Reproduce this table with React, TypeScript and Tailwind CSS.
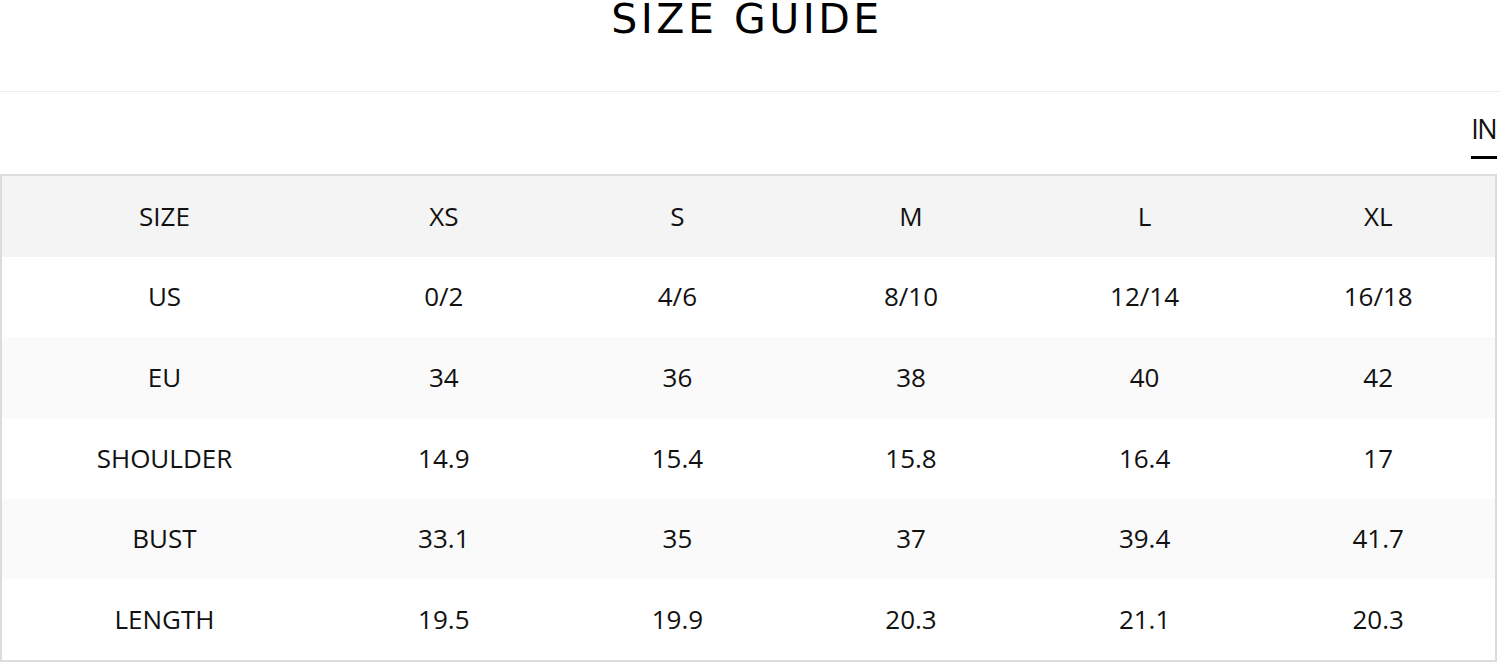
const rows: { label: string; values: string[]; bg: string }[] = [
  { label: "SIZE", values: ["XS", "S", "M", "L", "XL"], bg: "bg-[#f4f4f4]" },
  { label: "US", values: ["0/2", "4/6", "8/10", "12/14", "16/18"], bg: "bg-white" },
  { label: "EU", values: ["34", "36", "38", "40", "42"], bg: "bg-[#fafafa]" },
  { label: "SHOULDER", values: ["14.9", "15.4", "15.8", "16.4", "17"], bg: "bg-white" },
  { label: "BUST", values: ["33.1", "35", "37", "39.4", "41.7"], bg: "bg-[#fafafa]" },
  { label: "LENGTH", values: ["19.5", "19.9", "20.3", "21.1", "20.3"], bg: "bg-white" },
];

export default function App(): JSX.Element {
  return (
    <div className="w-[1500px] h-[665px] bg-white overflow-hidden flex flex-col text-[#111]">
      <div className="h-[92px] border-b border-[#ededed] flex justify-center pr-[6px]">
        <h1 className="font-['DejaVu_Sans',sans-serif] text-[41px] leading-[38px] tracking-[3.5px] text-black">
          SIZE GUIDE
        </h1>
      </div>

      <div className="flex justify-end pr-[3px]">
        <div className="mt-[23px] flex flex-col items-stretch">
          <span className="font-['Open_Sans',sans-serif] text-[27px] leading-none tracking-[-1.5px] pr-[1px]">IN</span>
          <div className="mt-[14px] h-[3px] bg-black" />
        </div>
      </div>

      <div className="mt-[15px] mr-[3px] h-[488px] border-2 border-[#dcdcdc] grid grid-rows-6 font-['Open_Sans',sans-serif] text-[26px]">
        {rows.map((row) => (
          <div key={row.label} className={`grid grid-cols-[325px_repeat(5,1fr)] items-center ${row.bg}`}>
            <div className="text-center">{row.label}</div>
            {row.values.map((v, i) => (
              <div key={i} className="text-center">
                {v}
              </div>
            ))}
          </div>
        ))}
      </div>
    </div>
  );
}
